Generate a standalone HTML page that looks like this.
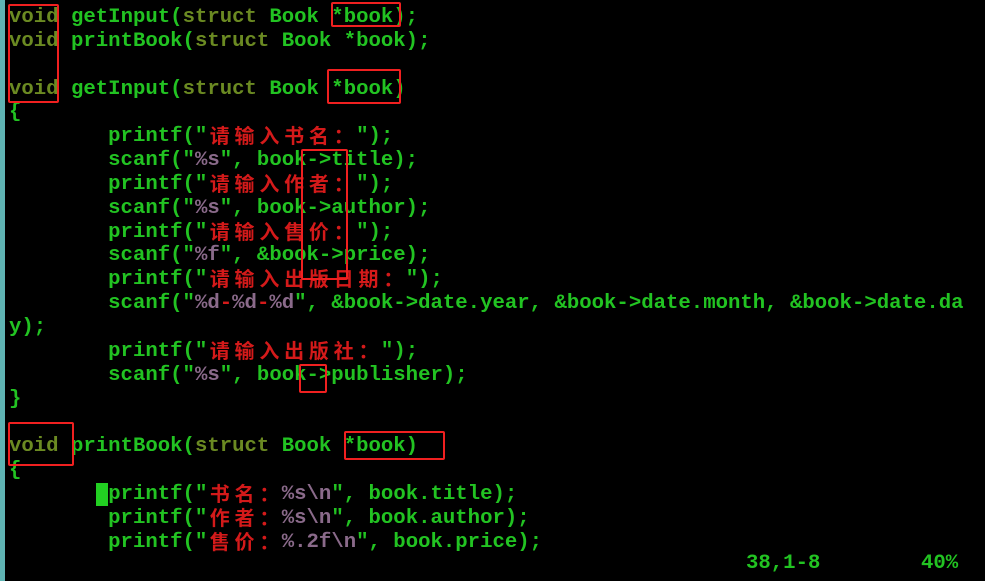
<!DOCTYPE html>
<html><head><meta charset="utf-8"><style>
html,body{margin:0;padding:0;background:#000;width:985px;height:581px;overflow:hidden;position:relative}
.strip{position:absolute;left:0;top:0;width:5px;height:581px;background:#5fb3b3}
pre{position:absolute;left:9px;top:6px;margin:0;font-family:"Liberation Mono","Noto Sans CJK SC",monospace;font-weight:bold;font-size:20.67px;line-height:23.85px;color:#22c322;white-space:pre}
.o{color:#6b8a22}
.r{color:#d41a1a}
.p{color:#8a6a8a}
.c{display:inline-block;width:24.8px;height:23.85px;line-height:20px;vertical-align:top;overflow:hidden;text-align:center;color:#d41a1a;font-family:"Noto Sans CJK SC",sans-serif;font-size:20px}
.cur{background:#22d022;color:#000}
.box{position:absolute;border:2px solid #f02020;border-radius:2px;box-sizing:border-box}
.st{position:absolute;top:552px;font-family:"Liberation Mono",monospace;font-weight:bold;font-size:20.67px;color:#22c322;line-height:24px}
</style></head><body>
<div class="strip"></div>
<pre><span class="o">void</span> getInput(<span class="o">struct</span> Book *book);
<span class="o">void</span> printBook(<span class="o">struct</span> Book *book);

<span class="o">void</span> getInput(<span class="o">struct</span> Book *book)
{
        printf("<span class="c">请</span><span class="c">输</span><span class="c">入</span><span class="c">书</span><span class="c">名</span><span class="c">：</span>");
        scanf("<span class="p">%s</span>", book-&gt;title);
        printf("<span class="c">请</span><span class="c">输</span><span class="c">入</span><span class="c">作</span><span class="c">者</span><span class="c">：</span>");
        scanf("<span class="p">%s</span>", book-&gt;author);
        printf("<span class="c">请</span><span class="c">输</span><span class="c">入</span><span class="c">售</span><span class="c">价</span><span class="c">：</span>");
        scanf("<span class="p">%f</span>", &amp;book-&gt;price);
        printf("<span class="c">请</span><span class="c">输</span><span class="c">入</span><span class="c">出</span><span class="c">版</span><span class="c">日</span><span class="c">期</span><span class="c">：</span>");
        scanf("<span class="p">%d</span><span class="r">-</span><span class="p">%d</span><span class="r">-</span><span class="p">%d</span>", &amp;book-&gt;date.year, &amp;book-&gt;date.month, &amp;book-&gt;date.da
y);
        printf("<span class="c">请</span><span class="c">输</span><span class="c">入</span><span class="c">出</span><span class="c">版</span><span class="c">社</span><span class="c">：</span>");
        scanf("<span class="p">%s</span>", book-&gt;publisher);
}

<span class="o">void</span> printBook(<span class="o">struct</span> Book *book)
{
       <span class="cur"> </span>printf("<span class="c">书</span><span class="c">名</span><span class="c">：</span><span class="p">%s\n</span>", book.title);
        printf("<span class="c">作</span><span class="c">者</span><span class="c">：</span><span class="p">%s\n</span>", book.author);
        printf("<span class="c">售</span><span class="c">价</span><span class="c">：</span><span class="p">%.2f\n</span>", book.price);</pre>
<div class="st" style="left:746px">38,1-8</div>
<div class="st" style="left:921px">40%</div>
<div class="box" style="left:8px;top:4px;width:51px;height:99px"></div>
<div class="box" style="left:331px;top:2px;width:70px;height:25px"></div>
<div class="box" style="left:327px;top:69px;width:74px;height:35px"></div>
<div class="box" style="left:301px;top:149px;width:47px;height:131px"></div>
<div class="box" style="left:299px;top:364px;width:28px;height:29px"></div>
<div class="box" style="left:8px;top:422px;width:66px;height:44px"></div>
<div class="box" style="left:344px;top:431px;width:101px;height:29px"></div>
</body></html>
